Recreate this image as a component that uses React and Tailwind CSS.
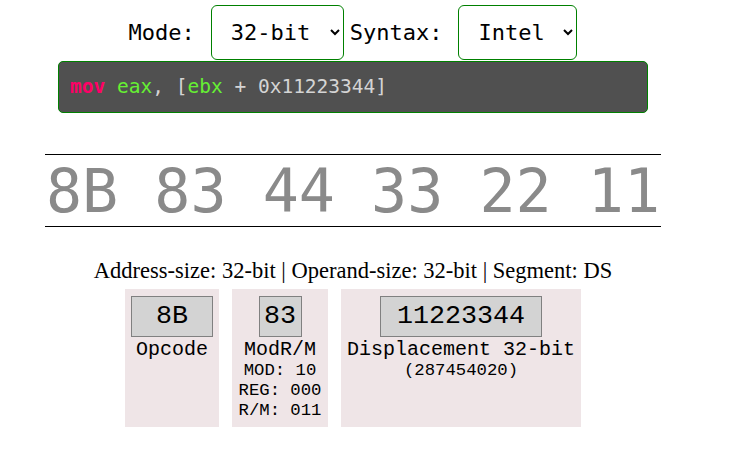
import React from 'react';

const mono = { fontFamily: '"DejaVu Sans Mono", monospace' };
const lmono = { fontFamily: '"Liberation Mono", monospace' };

function Field({ label, value, sub = [], boxW, colW }) {
  return (
    <div className="bg-[#efe5e7] px-[6px] pt-[7px] flex flex-col items-center" style={{ ...lmono, width: colW }}>
      <div className="h-[41px] bg-[#d3d3d3] border border-[#808080] flex items-center justify-center text-[26.7px] leading-none text-black" style={{ width: boxW }}>
        {value}
      </div>
      <div className="text-[20px] leading-[22px] text-black mt-[2px] whitespace-nowrap">{label}</div>
      {sub.map((s) => (
        <div key={s} className="text-[17.3px] leading-[20px] text-black whitespace-nowrap">{s}</div>
      ))}
    </div>
  );
}

export default function App() {
  return (
    <div className="w-[706px] bg-white h-[465px]">
      <div className="flex items-center justify-center pt-[5px] text-[22px] text-black" style={mono}>
        <span className="mr-[16px]">Mode:</span>
        <select defaultValue="32" className="w-[133px] h-[55px] border border-[#008000] rounded-[6px] pl-[15px] bg-white" style={mono}>
          <option value="16">16-bit</option>
          <option value="32">32-bit</option>
          <option value="64">64-bit</option>
        </select>
        <span className="ml-[6px] mr-[16px]">Syntax:</span>
        <select defaultValue="intel" className="w-[119px] h-[55px] border border-[#008000] rounded-[6px] pl-[15px] bg-white" style={mono}>
          <option value="intel">Intel</option>
          <option value="att">AT&amp;T</option>
        </select>
      </div>

      <div className="flex justify-center mt-[1px]">
        <div className="w-[590px] h-[52px] bg-[#505050] border border-[#008000] rounded-[5px] flex items-center pl-[11px] text-[19.5px] text-[#d4d4d4]" style={mono}>
          <span className="text-[#ff0066] font-bold">mov</span>
          <span>&nbsp;</span>
          <span className="text-[#66f033]">eax</span>
          <span>, [</span>
          <span className="text-[#66f033]">ebx</span>
          <span>&nbsp;+ 0x11223344]</span>
        </div>
      </div>

      <div className="flex justify-center mt-[41px]">
        <div className="w-[616px] h-[73px] border-t border-b border-black flex items-center justify-center text-[60px] text-[#8a8a8a] leading-none whitespace-pre" style={mono}>
          8B 83 44 33 22 11
        </div>
      </div>

      <div className="text-center text-[22.5px] text-black mt-[31px] leading-[25px]" style={{ fontFamily: '"Liberation Serif", serif' }}>
        Address-size: 32-bit | Operand-size: 32-bit | Segment: DS
      </div>

      <div className="flex justify-center gap-[13px] mt-[6px] h-[138px]">
        <Field value="8B" label="Opcode" boxW={82} colW={94} />
        <Field value="83" label="ModR/M" sub={['MOD: 10', 'REG: 000', 'R/M: 011']} boxW={43} colW={96} />
        <Field value="11223344" label="Displacement 32-bit" sub={['(287454020)']} boxW={162} colW={240} />
      </div>
    </div>
  );
}
